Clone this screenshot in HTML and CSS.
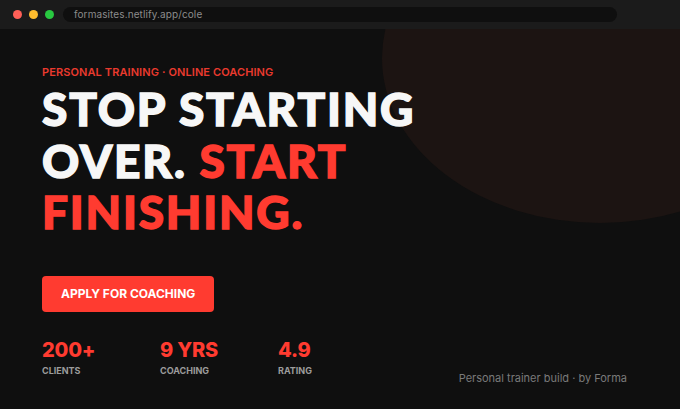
FILE: index.html
```html
<!DOCTYPE html>
<html lang="en">
<head>
<meta charset="utf-8">
<title>Cole — Personal Training</title>
<link rel="stylesheet" href="styles.css">
</head>
<body>
<div class="window">
  <div class="chrome">
    <div class="dots">
      <span class="dot dot-red"></span>
      <span class="dot dot-yellow"></span>
      <span class="dot dot-green"></span>
    </div>
    <div class="url">formasites.netlify.app/cole</div>
  </div>
  <div class="page">
    <div class="blob"></div>
    <main class="hero">
      <p class="eyebrow">Personal Training · Online Coaching</p>
      <h1 class="headline">STOP STARTING<br>OVER. <span class="accent">START<br>FINISHING.</span></h1>
      <a class="cta" href="#">Apply for coaching</a>
      <div class="bottom">
        <div class="stats">
          <div class="stat">
            <div class="stat-value">200+</div>
            <div class="stat-label">Clients</div>
          </div>
          <div class="stat">
            <div class="stat-value">9 YRS</div>
            <div class="stat-label">Coaching</div>
          </div>
          <div class="stat">
            <div class="stat-value">4.9</div>
            <div class="stat-label">Rating</div>
          </div>
        </div>
        <div class="credit">Personal trainer build · by Forma</div>
      </div>
    </main>
  </div>
</div>
</body>
</html>
```

FILE: styles.css
```css
* { box-sizing: border-box; }

html, body {
  margin: 0;
  padding: 0;
  background: #0f0f0f;
}

body {
  width: 680px;
  height: 409px;
  overflow: hidden;
  font-family: "Inter", "Liberation Sans", sans-serif;
}

.window {
  display: flex;
  flex-direction: column;
  height: 409px;
}

.chrome {
  height: 29px;
  flex: none;
  background: #1b1b1b;
  display: flex;
  align-items: center;
  padding-left: 13px;
}

.dots {
  display: flex;
  gap: 7px;
}

.dot {
  width: 9px;
  height: 9px;
  border-radius: 50%;
  display: block;
}

.dot-red { background: #ff5f57; }
.dot-yellow { background: #febc2e; }
.dot-green { background: #28c840; }

.url {
  margin-left: 9px;
  width: 554px;
  height: 15px;
  border-radius: 8px;
  background: #0f0f0f;
  color: #8c8c8c;
  font-size: 10px;
  line-height: 15px;
  padding-left: 11px;
  letter-spacing: 0.1px;
}

.page {
  position: relative;
  flex: 1;
  overflow: hidden;
  background: #0f0f0f;
}

.blob {
  position: absolute;
  left: 382px;
  top: -136px;
  width: 436px;
  height: 330px;
  border-radius: 50%;
  background: #1c1412;
}

.hero {
  position: relative;
  padding: 37px 0 0 42px;
  display: flex;
  flex-direction: column;
  align-items: flex-start;
  height: 100%;
}

.eyebrow {
  margin: 0;
  font-size: 11px;
  line-height: 13px;
  font-weight: 600;
  color: #ea3a2e;
  text-transform: uppercase;
  letter-spacing: 0.1px;
}

.headline {
  margin: 4px 0 0;
  font-family: "Lato", "Liberation Sans", sans-serif;
  font-weight: 900;
  font-size: 46px;
  line-height: 51.5px;
  color: #f7f7f7;
  letter-spacing: 1.8px;
  -webkit-text-stroke: 1.4px currentColor;
}

.accent { color: #ff3b30; }

.cta {
  margin-top: 38px;
  height: 36px;
  padding: 0 19px;
  display: inline-flex;
  align-items: center;
  border-radius: 4px;
  background: #ff3b30;
  color: #ffffff;
  text-decoration: none;
  text-transform: uppercase;
  font-size: 12px;
  font-weight: 700;
  letter-spacing: 0;
}

.bottom {
  align-self: stretch;
  display: flex;
  align-items: flex-end;
  margin-top: 26px;
  padding-right: 53px;
}

.stats {
  display: flex;
}

.stat {
  width: 118px;
}

.stat-value {
  font-size: 20px;
  line-height: 24px;
  font-weight: 800;
  color: #ff3b30;
  letter-spacing: -0.2px;
}

.stat-label {
  margin-top: 3px;
  font-size: 9px;
  line-height: 11px;
  font-weight: 700;
  color: #9c9c9c;
  text-transform: uppercase;
}

.credit {
  margin-left: auto;
  margin-bottom: -9px;
  font-size: 11px;
  line-height: 13px;
  color: #7a7a7a;
}
```
